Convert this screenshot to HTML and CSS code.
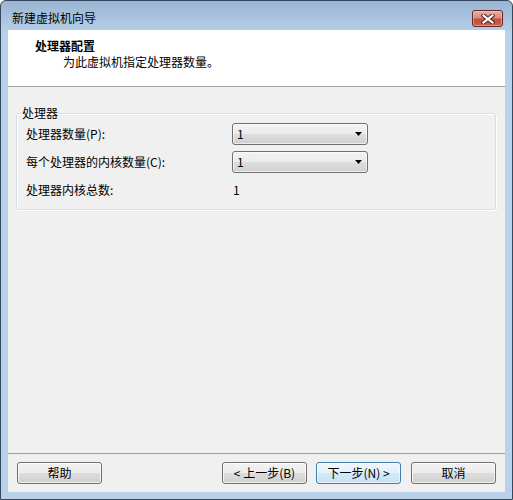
FILE: index.html
```html
<!DOCTYPE html>
<html lang="zh-CN">
<head>
<meta charset="utf-8">
<title>新建虚拟机向导</title>
<link rel="stylesheet" href="styles.css">
</head>
<body>
<div class="window">
  <div class="titlebar">
    <span class="title">新建虚拟机向导</span>
    <div class="close">
      <svg width="14" height="10" viewBox="0 0 14 10">
        <path d="M2.5 1.5 L11.5 8.5 M11.5 1.5 L2.5 8.5" stroke="#5b2a2a" stroke-width="4.2" stroke-linecap="square" fill="none"/>
        <path d="M2.5 1.5 L11.5 8.5 M11.5 1.5 L2.5 8.5" stroke="#ffffff" stroke-width="2.2" stroke-linecap="square" fill="none"/>
      </svg>
    </div>
  </div>
  <div class="client">
    <div class="header">
      <div class="h-title">处理器配置</div>
      <div class="h-sub">为此虚拟机指定处理器数量。</div>
    </div>
    <div class="body">
      <fieldset class="group">
        <legend>处理器</legend>
        <div class="grid">
          <span class="lbl">处理器数量(P):</span>
          <div class="combo"><span>1</span><svg class="arrow" width="7" height="4" viewBox="0 0 7 4"><path d="M0 0 H7 L3.5 4 Z" fill="#000"/></svg></div>
          <span class="lbl">每个处理器的内核数量(C):</span>
          <div class="combo"><span>1</span><svg class="arrow" width="7" height="4" viewBox="0 0 7 4"><path d="M0 0 H7 L3.5 4 Z" fill="#000"/></svg></div>
          <span class="lbl">处理器内核总数:</span>
          <span class="val">1</span>
        </div>
      </fieldset>
    </div>
    <div class="footer">
      <button class="btn">帮助</button>
      <span class="spacer"></span>
      <button class="btn back">&lt; 上一步(B)</button>
      <button class="btn next">下一步(N) &gt;</button>
      <button class="btn">取消</button>
    </div>
  </div>
</div>
</body>
</html>
```

FILE: styles.css
```css
html, body {
  margin: 0;
  padding: 0;
}
body {
  width: 513px;
  height: 500px;
  background: #ffffff;
  font-family: "Noto Sans CJK SC", "Noto Sans", sans-serif;
  font-size: 12px;
  color: #000;
  overflow: hidden;
}
.window {
  box-sizing: border-box;
  width: 513px;
  height: 500px;
  border: 1px solid #34495e;
  border-radius: 6px 6px 0 0;
  background: linear-gradient(#9ab5d2 0px, #b4cde7 28px, #b9d1ea 32px, #b9d1ea 100%);
  padding: 0 7px 7px;
  display: flex;
  flex-direction: column;
}
.titlebar {
  height: 29px;
  display: flex;
  align-items: flex-start;
}
.title {
  margin: 9px 0 0 4px;
  line-height: 16px;
}
.close {
  margin: 9px 2px 0 auto;
  box-sizing: border-box;
  width: 31px;
  height: 17px;
  border: 1px solid #5e2626;
  border-radius: 3px;
  background: linear-gradient(#eab1a6 0%, #d98a7a 45%, #c4503c 55%, #c9604b 100%);
  box-shadow: inset 0 0 0 1px rgba(255, 220, 210, 0.45);
  display: flex;
  align-items: center;
  justify-content: center;
}
.client {
  flex: 1;
  background: #f0f0f0;
  display: flex;
  flex-direction: column;
}
.header {
  box-sizing: border-box;
  height: 57px;
  background: #ffffff;
  border-bottom: 1px solid #a0a0a0;
  padding: 8px 0 0 27px;
  line-height: 16px;
}
.h-title {
  font-weight: bold;
}
.h-sub {
  margin-left: 28px;
}
.body {
  padding: 18px 9px 0 8px;
}
.group {
  margin: 0;
  border: 1px solid #d5dfe5;
  border-radius: 3px;
  box-shadow: inset 1px 1px 0 #ffffff, 1px 1px 0 #ffffff;
  padding: 2px 9px 8px 9px;
}
.group legend {
  padding: 0 1px;
  margin-left: -5px;
  line-height: 16px;
}
.grid {
  display: grid;
  grid-template-columns: 206px 136px;
  grid-auto-rows: 22px;
  row-gap: 6px;
  align-items: center;
  line-height: 16px;
}
.combo {
  box-sizing: border-box;
  height: 22px;
  border: 1px solid #707070;
  border-radius: 3px;
  background: linear-gradient(#f3f3f3 0%, #ebebeb 50%, #dedede 50%, #d0d0d0 100%);
  box-shadow: inset 0 0 0 1px rgba(255, 255, 255, 0.6);
  display: flex;
  align-items: center;
  padding: 0 5px 0 4px;
}
.combo .arrow {
  margin-left: auto;
}
.val {
  padding-left: 1px;
}
.footer {
  margin-top: auto;
  border-top: 1px solid #a0a0a0;
  padding: 8px 9px 8px 9px;
  display: flex;
}
.spacer {
  flex: 1;
}
.btn {
  box-sizing: border-box;
  width: 85px;
  height: 22px;
  padding: 0;
  border: 1px solid #707070;
  border-radius: 3px;
  background: linear-gradient(#f2f2f2 0%, #ebebeb 50%, #dddddd 50%, #cfcfcf 100%);
  box-shadow: inset 0 0 0 1px rgba(255, 255, 255, 0.7);
  font-family: inherit;
  font-size: 12px;
  line-height: 16px;
  color: #000;
}
.back {
  margin-right: 9px;
}
.next {
  margin-right: 10px;
  border-color: #3c7fb1;
  background: linear-gradient(#eef7fd 0%, #e2f1fb 50%, #d2eaf8 50%, #c5e2f5 100%);
  box-shadow: inset 0 0 0 1px rgba(255, 255, 255, 0.6);
}
```
